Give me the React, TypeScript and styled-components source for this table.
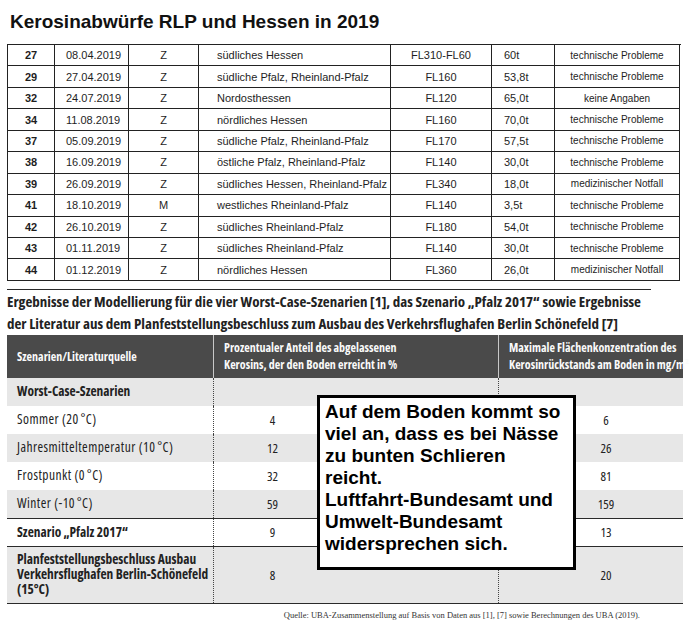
import React from 'react';
import styled, { createGlobalStyle } from 'styled-components';

const cond = `"Open Sans", "Liberation Sans Narrow", "DejaVu Sans Condensed", sans-serif`;

const GlobalStyle = createGlobalStyle`
  html, body {
    margin: 0;
    padding: 0;
    background: #fff;
  }
  body {
    font-family: "Liberation Sans", Arial, sans-serif;
    color: #1c1c1c;
  }
`;

interface Drop {
  no: string;
  date: string;
  type: string;
  region: string;
  level: string;
  amount: string;
  reason: string;
}

const drops: Drop[] = [
  { no: '27', date: '08.04.2019', type: 'Z', region: 'südliches Hessen', level: 'FL310-FL60', amount: '60t', reason: 'technische Probleme' },
  { no: '29', date: '27.04.2019', type: 'Z', region: 'südliche Pfalz, Rheinland-Pfalz', level: 'FL160', amount: '53,8t', reason: 'technische Probleme' },
  { no: '32', date: '24.07.2019', type: 'Z', region: 'Nordosthessen', level: 'FL120', amount: '65,0t', reason: 'keine Angaben' },
  { no: '34', date: '11.08.2019', type: 'Z', region: 'nördliches Hessen', level: 'FL160', amount: '70,0t', reason: 'technische Probleme' },
  { no: '37', date: '05.09.2019', type: 'Z', region: 'südliche Pfalz, Rheinland-Pfalz', level: 'FL170', amount: '57,5t', reason: 'technische Probleme' },
  { no: '38', date: '16.09.2019', type: 'Z', region: 'östliche Pfalz, Rheinland-Pfalz', level: 'FL140', amount: '30,0t', reason: 'technische Probleme' },
  { no: '39', date: '26.09.2019', type: 'Z', region: 'südliches Hessen, Rheinland-Pfalz', level: 'FL340', amount: '18,0t', reason: 'medizinischer Notfall' },
  { no: '41', date: '18.10.2019', type: 'M', region: 'westliches Rheinland-Pfalz', level: 'FL140', amount: '3,5t', reason: 'technische Probleme' },
  { no: '42', date: '26.10.2019', type: 'Z', region: 'südliches Rheinland-Pfalz', level: 'FL180', amount: '54,0t', reason: 'technische Probleme' },
  { no: '43', date: '01.11.2019', type: 'Z', region: 'südliches Rheinland-Pfalz', level: 'FL140', amount: '30,0t', reason: 'technische Probleme' },
  { no: '44', date: '01.12.2019', type: 'Z', region: 'nördliches Hessen', level: 'FL360', amount: '26,0t', reason: 'medizinischer Notfall' },
];

interface Scenario {
  label: React.ReactNode;
  share: string;
  conc: string;
  grey?: boolean;
  bold?: boolean;
  rule?: boolean;
  height: number;
}

const scenarios: Scenario[] = [
  { label: 'Worst-Case-Szenarien', share: '', conc: '', grey: true, bold: true, height: 28 },
  { label: 'Sommer (20\u202F°C)', share: '4', conc: '6', height: 28 },
  { label: 'Jahresmitteltemperatur (10\u202F°C)', share: '12', conc: '26', grey: true, height: 28 },
  { label: 'Frostpunkt (0\u202F°C)', share: '32', conc: '81', height: 28 },
  { label: 'Winter (-10\u202F°C)', share: '59', conc: '159', grey: true, height: 28 },
  { label: 'Szenario „Pfalz 2017“', share: '9', conc: '13', bold: true, rule: true, height: 28 },
  {
    label: (
      <>
        Planfeststellungsbeschluss Ausbau
        <br />
        Verkehrsflughafen Berlin-Schönefeld
        <br />
        (15°C)
      </>
    ),
    share: '8',
    conc: '20',
    grey: true,
    bold: true,
    rule: true,
    height: 57,
  },
];

export default function App() {
  return (
    <>
      <GlobalStyle />
      <Page>
        <Title>Kerosinabwürfe RLP und Hessen in 2019</Title>

        <DropTable>
          {drops.map((d) => (
            <DropRow key={d.no}>
              <DropCell align="center" bold>{d.no}</DropCell>
              <DropCell pad={11}>{d.date}</DropCell>
              <DropCell align="center">{d.type}</DropCell>
              <DropCell pad={18}>{d.region}</DropCell>
              <DropCell align="center">{d.level}</DropCell>
              <DropCell pad={12}>{d.amount}</DropCell>
              <DropCell align="center" small>{d.reason}</DropCell>
            </DropRow>
          ))}
        </DropTable>

        <Rule />

        <Caption>
          Ergebnisse der Modellierung für die vier Worst-Case-Szenarien [1], das Szenario „Pfalz 2017“ sowie Ergebnisse
          <br />
          der Literatur aus dem Planfeststellungsbeschluss zum Ausbau des Verkehrsflughafen Berlin Schönefeld [7]
        </Caption>

        <ResultTable>
          <HeadRow>
            <HeadCell>Szenarien/Literaturquelle</HeadCell>
            <HeadCell>
              Prozentualer Anteil des abgelassenen
              <br />
              Kerosins, der den Boden erreicht in %
            </HeadCell>
            <HeadCell last>
              Maximale Flächenkonzentration des
              <br />
              Kerosinrückstands am Boden in mg/m²
            </HeadCell>
          </HeadRow>
          {scenarios.map((s, i) => (
            <BodyRow key={i} grey={s.grey} rule={s.rule} h={s.height}>
              <LabelCell bold={s.bold}>{s.label}</LabelCell>
              <ValueCell padLeft={0} padRight={167}>{s.share}</ValueCell>
              <ValueCell padLeft={30} padRight={0} last>{s.conc}</ValueCell>
            </BodyRow>
          ))}
        </ResultTable>

        <SourceLine>
          <Source>
            Quelle: UBA-Zusammenstellung auf Basis von Daten aus [1], [7] sowie Berechnungen des UBA (2019).
          </Source>
        </SourceLine>

        <Note>
          Auf dem Boden kommt so
          <br />
          viel an, dass es bei Nässe
          <br />
          zu bunten Schlieren
          <br />
          reicht.
          <br />
          Luftfahrt-Bundesamt und
          <br />
          Umwelt-Bundesamt
          <br />
          widersprechen sich.
        </Note>
      </Page>
    </>
  );
}

const Page = styled.div`
  position: relative;
  width: 697px;
  height: 625px;
  box-sizing: border-box;
  padding: 11px 0 0 7px;
  overflow: hidden;
  display: flex;
  flex-direction: column;
`;

const Title = styled.h1`
  margin: 0 0 11px 3px;
  font: 700 19px/22px "Liberation Sans", Arial, sans-serif;
  color: #111;
`;

const DropTable = styled.div`
  width: 673px;
  border-top: 1px solid #222;
  border-left: 1px solid #222;
  display: flex;
  flex-direction: column;
`;

const DropRow = styled.div`
  display: grid;
  grid-template-columns: 47px 74px 70px 192px 101px 63px 125px;
  height: 21.45px;
`;

const DropCell = styled.div<{ align?: string; pad?: number; bold?: boolean; small?: boolean }>`
  display: flex;
  align-items: center;
  justify-content: ${(p) => (p.align === 'center' ? 'center' : 'flex-start')};
  padding-left: ${(p) => p.pad ?? 0}px;
  border-right: 1px solid #222;
  border-bottom: 1px solid #222;
  font-size: ${(p) => (p.small ? '10px' : '11px')};
  font-weight: ${(p) => (p.bold ? 700 : 400)};
  color: #1e1e1e;
  white-space: nowrap;
  overflow: hidden;
`;

const Rule = styled.div`
  width: 644px;
  height: 1px;
  margin-top: 8px;
  background: #2a2a2a;
`;

const Caption = styled.p`
  margin: 0;
  font-family: ${cond};
  font-stretch: 75%;
  font-weight: 700;
  font-size: 15px;
  line-height: 22px;
  color: #222;
  white-space: nowrap;
`;

const ResultTable = styled.div`
  width: 676px;
  margin-top: 1px;
  display: flex;
  flex-direction: column;
  font-family: ${cond};
  font-stretch: 75%;
`;

const HeadRow = styled.div`
  display: grid;
  grid-template-columns: 207px 285px 184px;
  height: 43px;
  background: #4a4a4a;
  color: #fafafa;
  font-size: 12px;
  font-weight: 700;
  line-height: 17px;
`;

const HeadCell = styled.div<{ last?: boolean }>`
  display: flex;
  align-items: center;
  padding: 0 0 0 10px;
  border-right: ${(p) => (p.last ? 'none' : '1px solid #c8c8c8')};
  white-space: nowrap;
`;

const BodyRow = styled.div<{ grey?: boolean; rule?: boolean; h: number }>`
  display: grid;
  grid-template-columns: 207px 285px 184px;
  height: ${(p) => p.h}px;
  box-sizing: border-box;
  background: ${(p) => (p.grey ? '#e7e7e7' : '#fff')};
  border-top: ${(p) => (p.rule ? '1px solid #2a2a2a' : 'none')};
  font-size: 13px;
  color: #222;

  &:last-child {
    border-bottom: 1px solid #2a2a2a;
    height: ${(p) => p.h + 1}px;
  }
`;

const LabelCell = styled.div<{ bold?: boolean }>`
  display: flex;
  align-items: center;
  padding-left: 10px;
  font-weight: ${(p) => (p.bold ? 700 : 400)};
  font-size: ${(p) => (p.bold ? '13.4px' : '13.5px')};
  letter-spacing: ${(p) => (p.bold ? '0' : '0.45px')};
  line-height: 15px;
  border-right: 1px dotted #444;
  white-space: nowrap;
`;

const ValueCell = styled.div<{ padLeft: number; padRight: number; last?: boolean }>`
  display: flex;
  align-items: center;
  justify-content: center;
  padding-left: ${(p) => p.padLeft}px;
  padding-right: ${(p) => p.padRight}px;
  border-right: ${(p) => (p.last ? 'none' : '1px dotted #444')};
`;

const SourceLine = styled.div`
  display: flex;
  justify-content: flex-end;
  width: 690px;
  padding-right: 57px;
  box-sizing: border-box;
  margin-top: 6px;
`;

const Source = styled.span`
  font: 8.5px/10px "Liberation Serif", "Times New Roman", serif;
  color: #333;
`;

const Note = styled.div`
  position: absolute;
  left: 317px;
  top: 395px;
  width: 259px;
  height: 175px;
  box-sizing: border-box;
  padding: 3px 0 0 5px;
  border: 3px solid #000;
  background: #fff;
  font: 700 19px/22px "Liberation Sans", Arial, sans-serif;
  color: #000;
  white-space: nowrap;
`;
